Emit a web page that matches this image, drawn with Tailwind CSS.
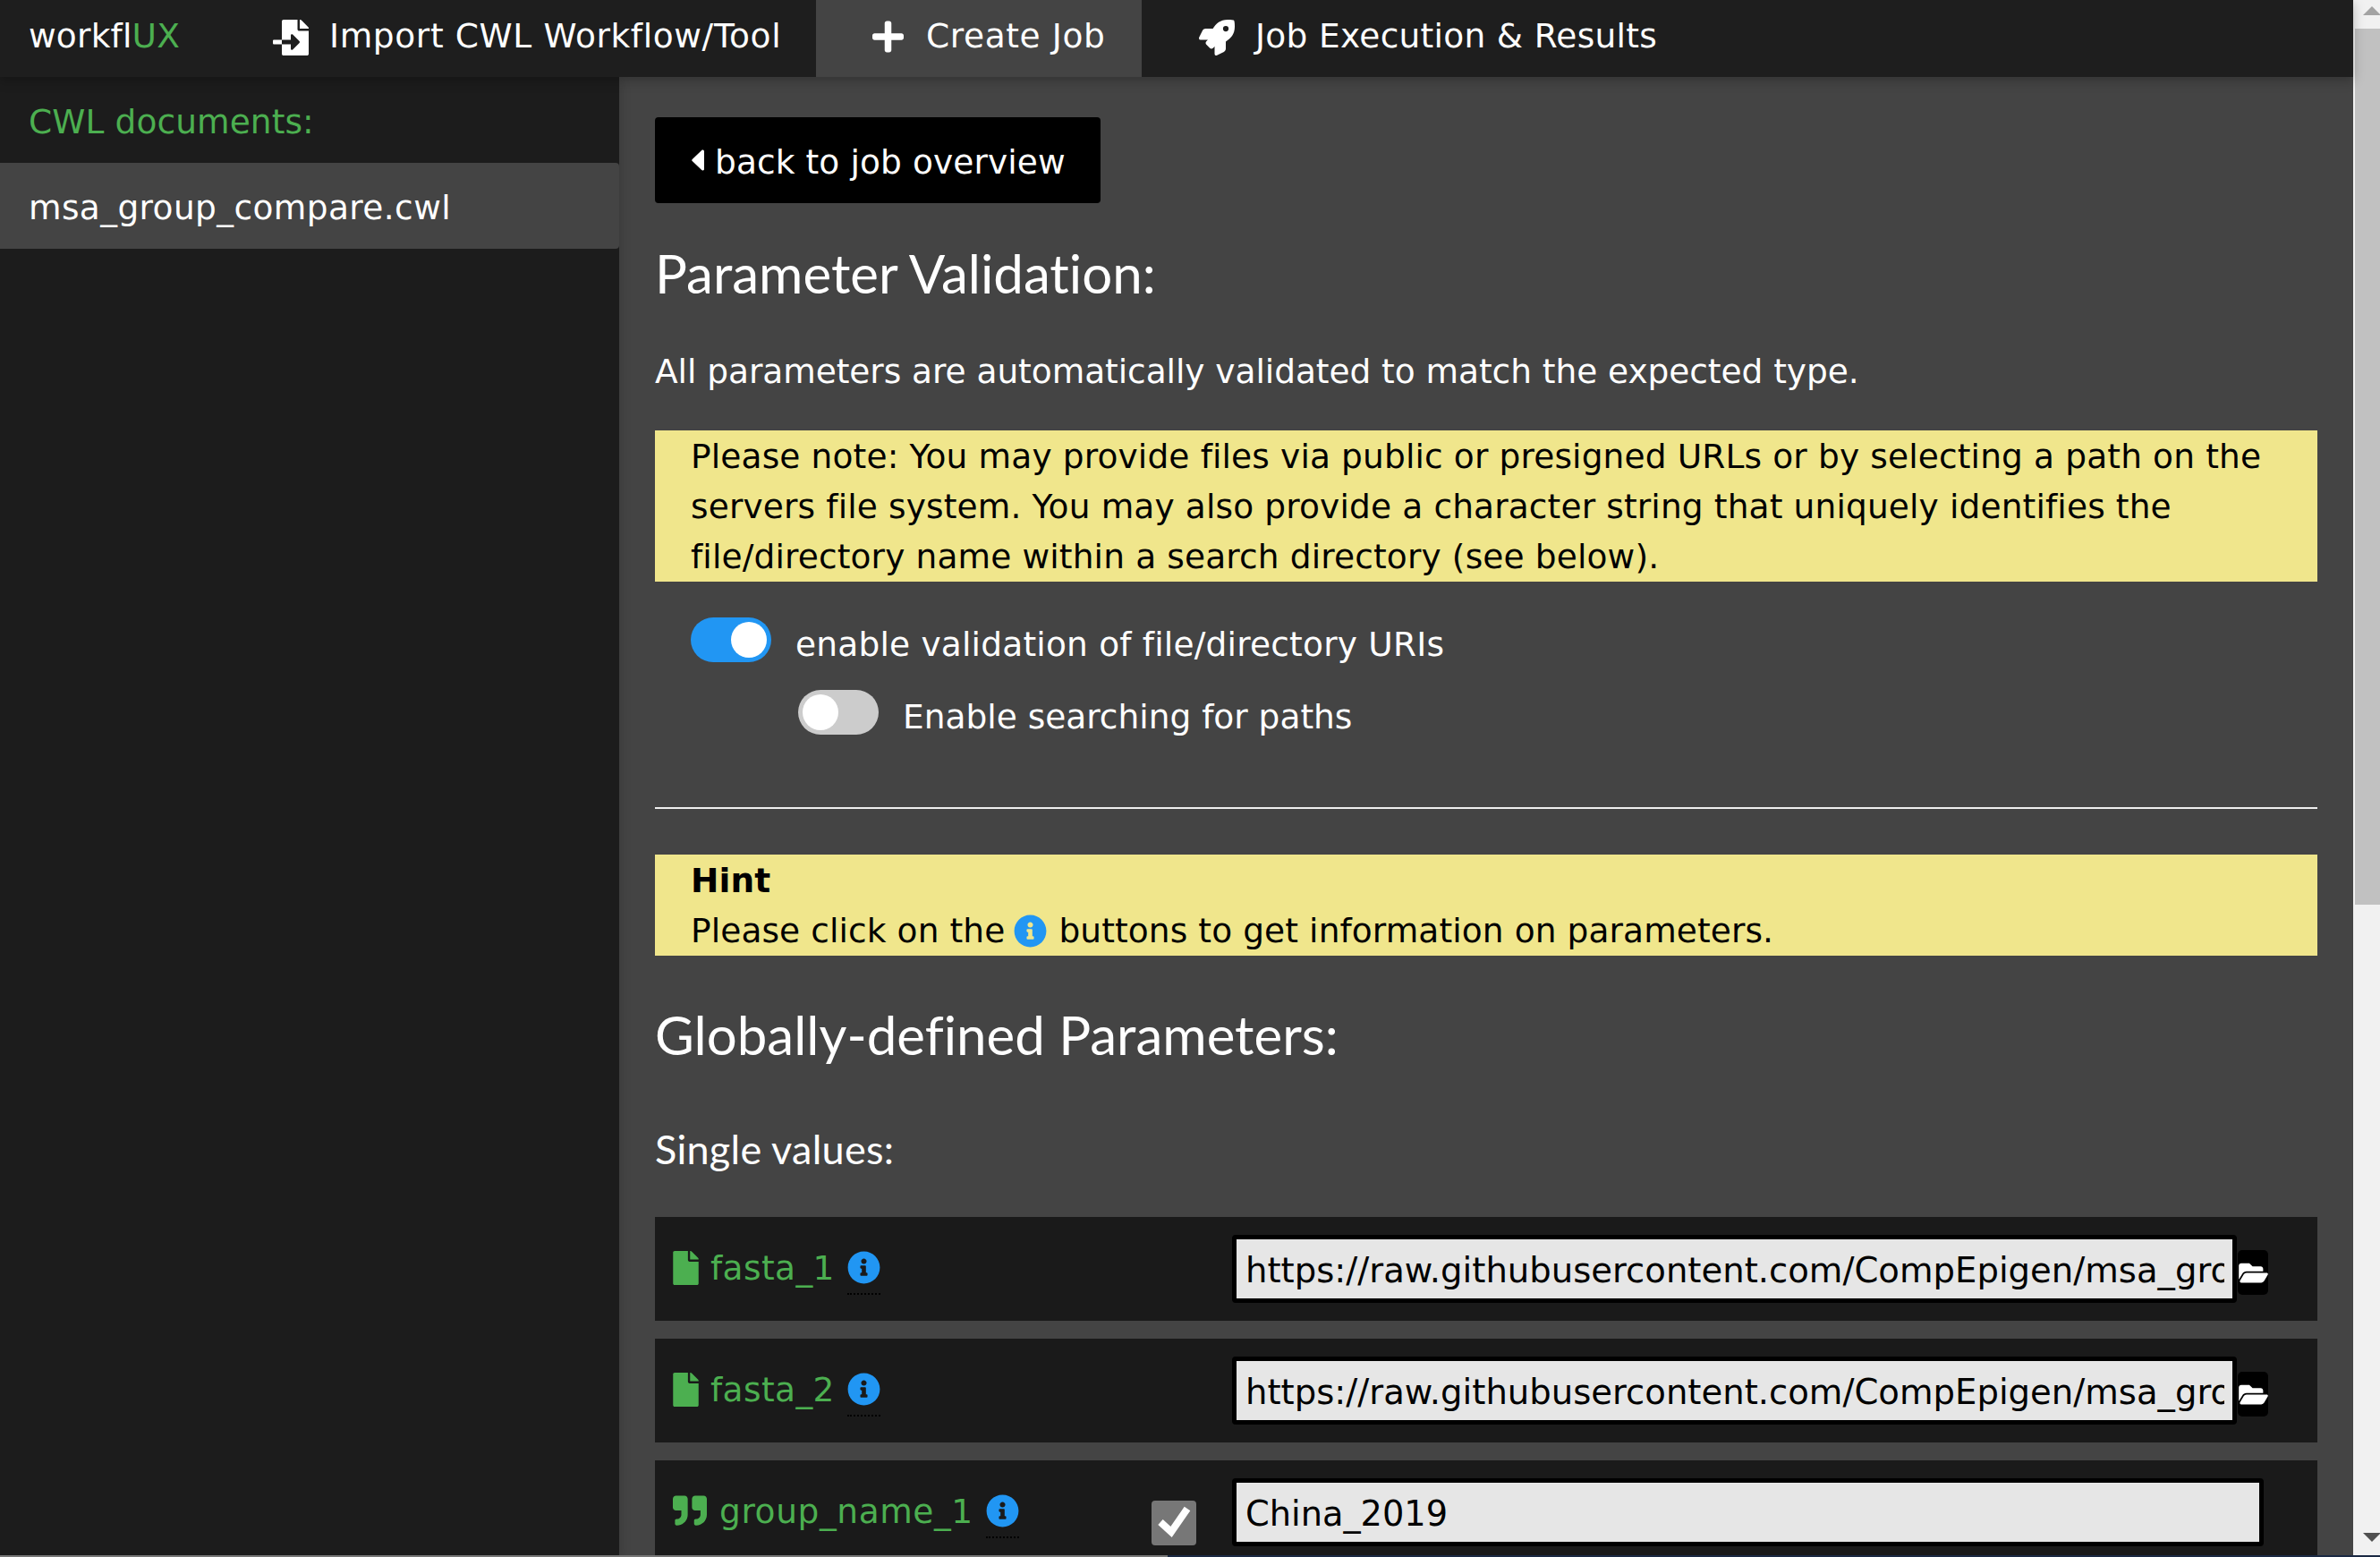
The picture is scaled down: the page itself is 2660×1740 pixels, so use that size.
<!DOCTYPE html>
<html>
<head>
<meta charset="utf-8">
<script src="https://cdn.jsdelivr.net/npm/@tailwindcss/browser@4"></script>
</head>
<body class="m-0 h-[1740px] w-[2660px] overflow-hidden bg-[#444] font-['DejaVu_Sans',Verdana,sans-serif] text-[37.5px] leading-[56px] text-white">
<div class="flex h-[1738px] w-[2660px] overflow-hidden">
  <div class="flex h-full w-[2630px] flex-col">
    <header class="relative z-10 flex h-[86px] shrink-0 items-center bg-[#1e1e1e] shadow-[0_4px_12px_rgba(0,0,0,0.25)]">
      <div class="mb-[6px] w-[264px] pl-[32px] tracking-[0.2px]">workfl<span class="text-[#4caf50]">UX</span></div>
      <div class="flex h-full w-[648px] items-center pb-[6px]">
        <svg class="ml-[41px] mt-[3px] h-[40px] w-[40px]" viewBox="0 0 512 512" fill="#fff"><path d="M16 288c-8.8 0-16 7.2-16 16v32c0 8.8 7.2 16 16 16h112v-64zm489-183L407.1 7c-4.5-4.5-10.6-7-17-7H384v128h128v-6.1c0-6.3-2.5-12.4-7-16.9zm-153 31V0H152c-13.3 0-24 10.7-24 24v264h128v-65.2c0-14.3 17.3-21.4 27.4-11.3L379 308c6.6 6.7 6.6 17.4 0 24l-95.7 96.4c-10.1 10.1-27.4 3-27.4-11.3V352H128v136c0 13.3 10.7 24 24 24h336c13.3 0 24-10.7 24-24V160H376c-13.2 0-24-10.8-24-24z"/></svg>
        <span class="ml-[23px] tracking-[0.63px]">Import CWL Workflow/Tool</span>
      </div>
      <div class="flex h-full w-[364px] items-center bg-[#444] pb-[6px]">
        <svg class="ml-[63px] mt-[1px] h-[40px] w-[35px]" viewBox="0 0 448 512" fill="#fff"><path d="M416 208H272V64c0-17.67-14.33-32-32-32h-32c-17.67 0-32 14.33-32 32v144H32c-17.67 0-32 14.33-32 32v32c0 17.67 14.33 32 32 32h144v144c0 17.67 14.33 32 32 32h32c17.67 0 32-14.33 32-32V304h144c17.67 0 32-14.33 32-32v-32c0-17.67-14.33-32-32-32z"/></svg>
        <span class="ml-[25px] tracking-[0.6px]">Create Job</span>
      </div>
      <div class="flex h-full items-center pb-[6px]">
        <svg class="ml-[64px] mt-[3px] h-[40px] w-[40px]" viewBox="0 0 512 512" fill="#fff"><path d="M505.12019,19.09375c-1.18945-5.53125-6.65819-11-12.207-12.1875C460.716,0,435.507,0,410.40747,0,307.17523,0,245.26909,55.20312,199.05238,128H94.83772c-16.34763.01562-35.55658,11.875-42.88664,26.48438L2.51562,253.29688A28.4,28.4,0,0,0,0,264a24.00867,24.00867,0,0,0,24.00582,24H127.81618l-22.47457,22.46875c-11.36521,11.36133-12.99607,32.25781,0,45.25L156.24582,406.625c11.15623,11.1875,32.15619,13.15625,45.25,0l22.47457-22.46875V488a24.00867,24.00867,0,0,0,24,24,28.55934,28.55934,0,0,0,10.707-2.51562l98.72834-49.39063c14.62888-7.29687,26.50776-26.5,26.50776-42.85937V312.79688c72.59753-46.3125,128.03493-108.40626,128.03493-211.09376C512.07526,76.5,512.07526,51.29688,505.12019,19.09375ZM384.04033,168A40,40,0,1,1,424.05,128,40.02322,40.02322,0,0,1,384.04033,168Z"/></svg>
        <span class="ml-[23px] tracking-[0.3px]">Job Execution &amp; Results</span>
      </div>
    </header>
    <div class="flex min-h-0 flex-1">
      <aside class="relative w-[692px] shrink-0 bg-[#1c1c1c] shadow-[0_4px_12px_rgba(0,0,0,0.2)]">
        <div class="flex h-[96px] items-center pl-[32px] pt-[3px] tracking-[0.1px] text-[#4caf50]">CWL documents:</div>
        <div class="flex h-[96px] items-center rounded-r-[4px] bg-[#444] pl-[32px] pt-[3px] tracking-[0.4px]">msa_group_compare.cwl</div>
      </aside>
      <main class="min-w-0 flex-1 overflow-hidden pl-[40px] pr-[40px] pt-[45px]">
        <button class="flex h-[96px] w-[498px] items-center rounded-[4px] bg-black pl-[41px] text-[37.5px]">
          <svg class="mr-[12px] h-[24px] w-[14px]" viewBox="20 100 172 312" preserveAspectRatio="none" fill="#fff"><path d="M192 127.338v257.324c0 17.818-21.543 26.741-34.142 14.142L29.196 270.142c-7.81-7.81-7.81-20.474 0-28.284l128.662-128.662c12.599-12.6 34.142-3.676 34.142 14.142z"/></svg><span class="pt-[3px] tracking-[0.1px]">back to job overview</span>
        </button>
        <h3 class="mt-[42px] font-['Lato',sans-serif] text-[60px] leading-[72px] [font-variant-ligatures:none]">Parameter Validation:</h3>
        <p class="mt-[46px] h-[56px] tracking-[-0.05px]">All parameters are automatically validated to match the expected type.</p>
        <div class="mt-[38px] h-[169px] bg-[#f0e68c] px-[40px] pt-[1px] tracking-[0.14px] text-black">Please note: You may provide files via public or presigned URLs or by selecting a path on the servers file system. You may also provide a character string that uniquely identifies the file/directory name within a search directory (see below).</div>
        <div class="mt-[40px] flex h-[50px] items-center pl-[40px]">
          <div class="relative h-[50px] w-[90px] rounded-full bg-[#2196f3]"><div class="absolute left-[45px] top-[5px] h-[40px] w-[40px] rounded-full bg-white"></div></div>
          <span class="ml-[27px] pt-[10px] tracking-[0.2px]">enable validation of file/directory URIs</span>
        </div>
        <div class="mt-[31px] flex h-[50px] items-center pl-[160px]">
          <div class="relative h-[50px] w-[90px] rounded-full bg-[#ccc]"><div class="absolute left-[5px] top-[5px] h-[40px] w-[40px] rounded-full bg-white"></div></div>
          <span class="ml-[27px] pt-[10px]">Enable searching for paths</span>
        </div>
        <hr class="mt-[81px] border-0 border-t-2 border-[#eee]">
        <div class="mt-[51px] h-[113px] bg-[#f0e68c] px-[40px] pt-[1px] tracking-[0.1px] text-black">
          <div class="font-bold">Hint</div>
          <div class="flex items-center">Please click on the
            <svg class="ml-[10px] mr-[13px] h-[37px] w-[37px]" viewBox="0 0 512 512" fill="#2196f3"><path d="M256 8C119.043 8 8 119.083 8 256c0 136.997 111.043 248 248 248s248-111.003 248-248C504 119.083 392.957 8 256 8zm0 110c23.196 0 42 18.804 42 42s-18.804 42-42 42-42-18.804-42-42 18.804-42 42-42zm56 254c0 6.627-5.373 12-12 12h-88c-6.627 0-12-5.373-12-12v-24c0-6.627 5.373-12 12-12h12v-64h-12c-6.627 0-12-5.373-12-12v-24c0-6.627 5.373-12 12-12h64c6.627 0 12 5.373 12 12v100h12c6.627 0 12 5.373 12 12v24z"/></svg>
            buttons to get information on parameters.</div>
        </div>
        <h3 class="mt-[52px] font-['Lato',sans-serif] text-[60px] leading-[72px] [font-variant-ligatures:none]">Globally-defined Parameters:</h3>
        <p class="mt-[64px] h-[56px] font-['Lato',sans-serif] text-[45px] tracking-[0.25px]">Single values:</p>
        <div class="mt-[48px] flex h-[116px] items-start bg-[#1a1a1a]">
          <div class="flex h-full w-[645px] shrink-0 pl-[20px] text-[#4caf50]">
            <svg class="mt-[38px] h-[38px] w-[29px]" viewBox="0 0 384 512" fill="#4caf50"><path d="M224 136V0H24C10.7 0 0 10.7 0 24v464c0 13.3 10.7 24 24 24h336c13.3 0 24-10.7 24-24V160H248c-13.2 0-24-10.8-24-24zm160-14.1v6.1H256V0h6.1c6.4 0 12.5 2.5 17 7l97.9 98c4.5 4.5 7 10.6 7 16.9z"/></svg>
            <span class="ml-[13px] mt-[29px] tracking-[0.4px]">fasta_1</span>
            <div class="ml-[14px] mt-[38px] h-[49px] w-[37px] border-b-2 border-dotted border-black"><svg class="h-[37px] w-[37px]" viewBox="0 0 512 512" fill="#2196f3"><path d="M256 8C119.043 8 8 119.083 8 256c0 136.997 111.043 248 248 248s248-111.003 248-248C504 119.083 392.957 8 256 8zm0 110c23.196 0 42 18.804 42 42s-18.804 42-42 42-42-18.804-42-42 18.804-42 42-42zm56 254c0 6.627-5.373 12-12 12h-88c-6.627 0-12-5.373-12-12v-24c0-6.627 5.373-12 12-12h12v-64h-12c-6.627 0-12-5.373-12-12v-24c0-6.627 5.373-12 12-12h64c6.627 0 12 5.373 12 12v100h12c6.627 0 12 5.373 12 12v24z"/></svg></div>
          </div>
          <div class="mt-[20px] flex h-[76px] w-[1123px] items-center rounded-[4px] border-[5px] border-black bg-[#e6e6e6] pl-[10px] pr-[9px] pt-[4px] text-[38.6px] whitespace-nowrap text-black"><span class="block overflow-hidden">https://raw.githubusercontent.com/CompEpigen/msa_group_compare/main/fasta_1.fa</span></div>
          <div class="relative ml-[1px] mt-[37px] h-[50px] w-[34px] rounded-[5px] bg-black"><svg class="absolute left-[1px] top-[11px] h-[29px] w-[33px]" viewBox="0 0 576 512" fill="#fff"><path d="M572.694 292.093L500.27 416.248A63.997 63.997 0 0 1 444.989 448H45.025c-18.523 0-30.064-20.093-20.731-36.093l72.424-124.155A64 64 0 0 1 152 256h399.964c18.523 0 30.064 20.093 20.73 36.093zM152 224h328v-48c0-26.51-21.49-48-48-48H272l-64-64H48C21.49 64 0 85.49 0 112v278.046l69.077-118.418C86.214 242.25 118.492 224 152 224z"/></svg></div>
        </div>
        <div class="mt-[20px] flex h-[116px] items-start bg-[#1a1a1a]">
          <div class="flex h-full w-[645px] shrink-0 pl-[20px] text-[#4caf50]">
            <svg class="mt-[38px] h-[38px] w-[29px]" viewBox="0 0 384 512" fill="#4caf50"><path d="M224 136V0H24C10.7 0 0 10.7 0 24v464c0 13.3 10.7 24 24 24h336c13.3 0 24-10.7 24-24V160H248c-13.2 0-24-10.8-24-24zm160-14.1v6.1H256V0h6.1c6.4 0 12.5 2.5 17 7l97.9 98c4.5 4.5 7 10.6 7 16.9z"/></svg>
            <span class="ml-[13px] mt-[29px] tracking-[0.4px]">fasta_2</span>
            <div class="ml-[14px] mt-[38px] h-[49px] w-[37px] border-b-2 border-dotted border-black"><svg class="h-[37px] w-[37px]" viewBox="0 0 512 512" fill="#2196f3"><path d="M256 8C119.043 8 8 119.083 8 256c0 136.997 111.043 248 248 248s248-111.003 248-248C504 119.083 392.957 8 256 8zm0 110c23.196 0 42 18.804 42 42s-18.804 42-42 42-42-18.804-42-42 18.804-42 42-42zm56 254c0 6.627-5.373 12-12 12h-88c-6.627 0-12-5.373-12-12v-24c0-6.627 5.373-12 12-12h12v-64h-12c-6.627 0-12-5.373-12-12v-24c0-6.627 5.373-12 12-12h64c6.627 0 12 5.373 12 12v100h12c6.627 0 12 5.373 12 12v24z"/></svg></div>
          </div>
          <div class="mt-[20px] flex h-[76px] w-[1123px] items-center rounded-[4px] border-[5px] border-black bg-[#e6e6e6] pl-[10px] pr-[9px] pt-[4px] text-[38.6px] whitespace-nowrap text-black"><span class="block overflow-hidden">https://raw.githubusercontent.com/CompEpigen/msa_group_compare/main/fasta_2.fa</span></div>
          <div class="relative ml-[1px] mt-[37px] h-[50px] w-[34px] rounded-[5px] bg-black"><svg class="absolute left-[1px] top-[11px] h-[29px] w-[33px]" viewBox="0 0 576 512" fill="#fff"><path d="M572.694 292.093L500.27 416.248A63.997 63.997 0 0 1 444.989 448H45.025c-18.523 0-30.064-20.093-20.731-36.093l72.424-124.155A64 64 0 0 1 152 256h399.964c18.523 0 30.064 20.093 20.73 36.093zM152 224h328v-48c0-26.51-21.49-48-48-48H272l-64-64H48C21.49 64 0 85.49 0 112v278.046l69.077-118.418C86.214 242.25 118.492 224 152 224z"/></svg></div>
        </div>
        <div class="mt-[20px] flex h-[116px] items-start bg-[#1a1a1a]">
          <div class="flex h-full w-[555px] shrink-0 pl-[20px] text-[#4caf50]">
            <svg class="mt-[37px] h-[38px] w-[38px]" viewBox="0 0 512 512" fill="#4caf50"><path d="M464 32H336c-26.5 0-48 21.5-48 48v128c0 26.5 21.5 48 48 48h80v64c0 35.3-28.7 64-64 64h-8c-13.3 0-24 10.7-24 24v48c0 13.3 10.7 24 24 24h8c88.4 0 160-71.6 160-160V80c0-26.5-21.5-48-48-48zm-288 0H48C21.5 32 0 53.5 0 80v128c0 26.5 21.5 48 48 48h80v64c0 35.3-28.7 64-64 64h-8c-13.3 0-24 10.7-24 24v48c0 13.3 10.7 24 24 24h8c88.4 0 160-71.6 160-160V80c0-26.5-21.5-48-48-48z"/></svg>
            <span class="ml-[14px] mt-[29px] tracking-[0.6px]">group_name_1</span>
            <div class="ml-[14px] mt-[38px] h-[49px] w-[37px] border-b-2 border-dotted border-black"><svg class="h-[37px] w-[37px]" viewBox="0 0 512 512" fill="#2196f3"><path d="M256 8C119.043 8 8 119.083 8 256c0 136.997 111.043 248 248 248s248-111.003 248-248C504 119.083 392.957 8 256 8zm0 110c23.196 0 42 18.804 42 42s-18.804 42-42 42-42-18.804-42-42 18.804-42 42-42zm56 254c0 6.627-5.373 12-12 12h-88c-6.627 0-12-5.373-12-12v-24c0-6.627 5.373-12 12-12h12v-64h-12c-6.627 0-12-5.373-12-12v-24c0-6.627 5.373-12 12-12h64c6.627 0 12 5.373 12 12v100h12c6.627 0 12 5.373 12 12v24z"/></svg></div>
          </div>
          <div class="mt-[45px] h-[50px] w-[50px] rounded-[4px] bg-[#777]"><svg class="h-[50px] w-[50px]" viewBox="0 0 50 50"><path d="M10 24l12 11 18-26" fill="none" stroke="#fff" stroke-width="8"/></svg></div>
          <div class="ml-[40px] mt-[20px] flex h-[76px] w-[1153px] items-center rounded-[4px] border-[5px] border-black bg-[#e6e6e6] pl-[10px] pt-[4px] text-[38.3px] text-black">China_2019</div>
        </div>
      </main>
    </div>
  </div>
  <div class="flex h-full w-[30px] flex-col bg-[#f1f1f1]">
    <div class="h-[32px] shrink-0 pl-[11px] pt-[7px]"><div class="h-0 w-0 border-x-[10px] border-b-[10px] border-x-transparent border-b-[#a3a3a3]"></div></div>
    <div class="ml-[2px] h-[979px] bg-[#c1c1c1]"></div>
    <div class="flex-1"></div>
    <div class="h-[25px] shrink-0 pl-[11px]"><div class="h-0 w-0 border-x-[10px] border-t-[10px] border-x-transparent border-t-[#505050]"></div></div>
  </div>
</div>
<div class="flex h-[2px] w-full"><div class="w-[1305px] bg-[#777]"></div><div class="flex-1 bg-[#1b2a44]"></div></div>
</body>
</html>
